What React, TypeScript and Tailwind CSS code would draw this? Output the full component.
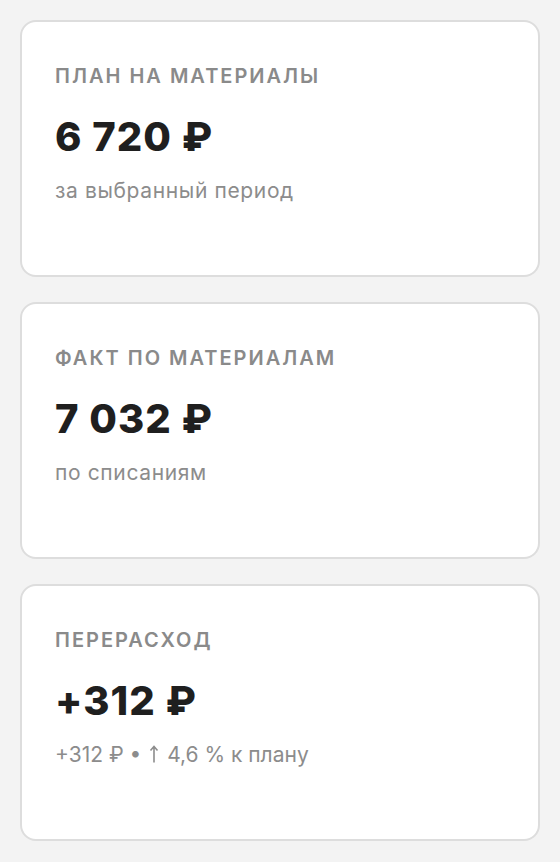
const cards = [
  { label: "План на материалы", value: "6 720 ₽", note: "за выбранный период" },
  { label: "Факт по материалам", value: "7 032 ₽", note: "по списаниям" },
  { label: "Перерасход", value: "+312 ₽", note: null },
];

function ArrowUp() {
  return (
    <svg width="10" height="18" viewBox="0 0 10 18" className="mx-[2px] inline-block align-[-1px]">
      <path d="M5 17.5V1.5M1.5 5.5L5 1.5L8.5 5.5" fill="none" stroke="#8c8c8c" strokeWidth="1.6" />
    </svg>
  );
}

export default function App() {
  return (
    <div className="min-h-[862px] bg-[#f3f3f3] px-5 py-5 font-['Inter',sans-serif]">
      <div className="flex flex-col gap-[25px]">
        {cards.map((card) => (
          <div
            key={card.label}
            className="h-[257px] rounded-2xl border-2 border-[#dddddd] bg-white px-[33px] pt-[38px]"
          >
            <div className="text-[20px] font-semibold uppercase leading-[32px] tracking-[0.1em] text-[#8a8a8a]">
              {card.label}
            </div>
            <div className="mt-[23px] text-[40px] font-extrabold leading-[44px] tracking-[0.025em] text-[#1f1f1f]">
              {card.value}
            </div>
            {card.note ? (
              <div className="mt-[17px] text-[21px] leading-[30px] tracking-[0.03em] text-[#8c8c8c]">
                {card.note}
              </div>
            ) : (
              <div className="mt-[17px] text-[21px] leading-[30px] text-[#8c8c8c]">
                +312 ₽ • <ArrowUp /> 4,6 % к плану
              </div>
            )}
          </div>
        ))}
      </div>
    </div>
  );
}
